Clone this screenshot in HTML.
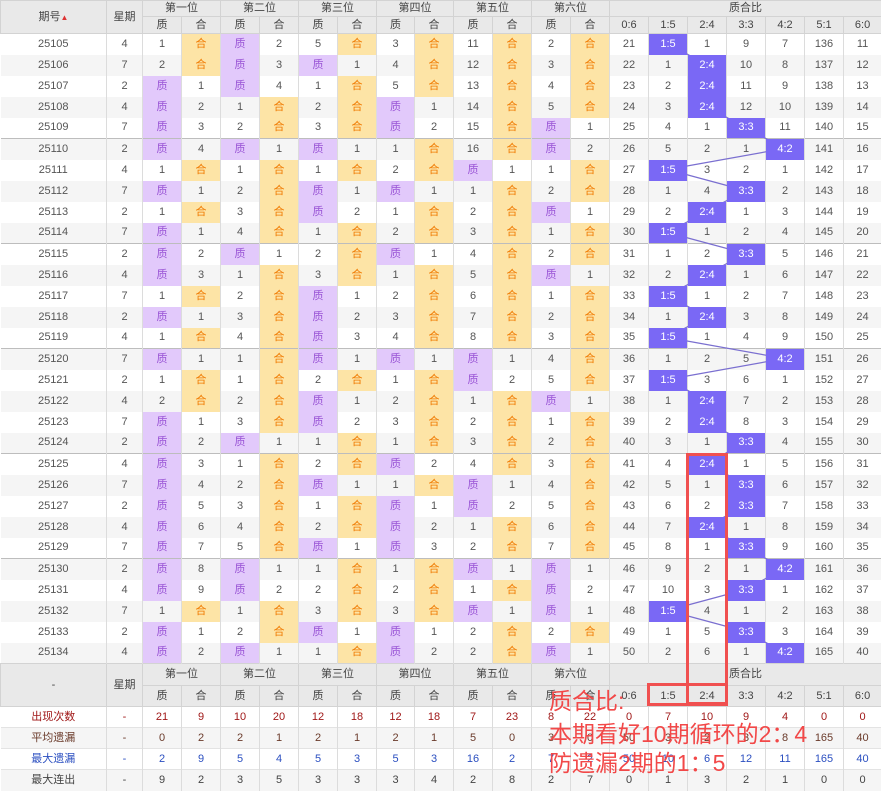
<!DOCTYPE html>
<html><head><meta charset="utf-8">
<style>
*{margin:0;padding:0;box-sizing:border-box}
body{width:881px;height:789px;overflow:hidden;background:#fff;font-family:"Liberation Sans","Noto Sans CJK SC",sans-serif;font-size:11px;color:#555;position:relative}
table{border-collapse:collapse;table-layout:fixed;width:881px;position:absolute;left:0;top:0}
td{text-align:center;border-right:1px solid #dcdcdc;padding:0;white-space:nowrap;overflow:hidden;line-height:13px;height:21px}
tr.d{height:21px}
tr.g td{background:#f5f5f5}
tr.s td{border-top:1px solid #bdbdbd}
.hd td{background:#e9e9e9;color:#444;border:1px solid #d3d3d3}
tr.h1 td{height:16px}tr.h2 td{height:17px}
tr.h3 td{height:22px}tr.h4 td{height:21px}
td.z{background:#e2c9fb !important;color:#9a55d6;position:relative;z-index:3}
td.h{background:#fde4a6 !important;color:#f07a00;position:relative;z-index:3}
td.k{background:#7a68f5 !important;color:#fff;position:relative;z-index:3}
.ft td{border-top:1px solid #e3e3e3}
.r1 td{color:#a01818}.r2 td{color:#6a3a2a}.r3 td{color:#2b4fc0}.r4 td{color:#444}
svg{position:absolute;left:0;top:0;z-index:2}
.ann{position:absolute;color:#f24848;font-size:23px;z-index:5;font-family:"Liberation Sans","Noto Sans CJK SC",sans-serif;line-height:26px}
.box{position:absolute;border:3px solid #f05050;z-index:5}
</style></head><body>
<table>
<colgroup><col style="width:106px"><col style="width:36px">
<col style="width:39px"><col style="width:39px"><col style="width:39px"><col style="width:39px"><col style="width:39px"><col style="width:39px"><col style="width:38px"><col style="width:39px"><col style="width:39px"><col style="width:39px"><col style="width:39px"><col style="width:39px">
<col style="width:39px"><col style="width:39px"><col style="width:39px"><col style="width:39px"><col style="width:39px"><col style="width:39px"><col style="width:38px"></colgroup>
<tr class="hd h1"><td rowspan="2">期号<span style="color:#d33;font-size:8px">▲</span></td><td rowspan="2">星期</td><td colspan="2">第一位</td><td colspan="2">第二位</td><td colspan="2">第三位</td><td colspan="2">第四位</td><td colspan="2">第五位</td><td colspan="2">第六位</td><td colspan="7">质合比</td></tr>
<tr class="hd h2"><td>质</td><td>合</td><td>质</td><td>合</td><td>质</td><td>合</td><td>质</td><td>合</td><td>质</td><td>合</td><td>质</td><td>合</td><td>0:6</td><td>1:5</td><td>2:4</td><td>3:3</td><td>4:2</td><td>5:1</td><td>6:0</td></tr>
<tr class="d"><td>25105</td><td>4</td><td>1</td><td class="h">合</td><td class="z">质</td><td>2</td><td>5</td><td class="h">合</td><td>3</td><td class="h">合</td><td>11</td><td class="h">合</td><td>2</td><td class="h">合</td><td>21</td><td class="k">1:5</td><td>1</td><td>9</td><td>7</td><td>136</td><td>11</td></tr>
<tr class="d g"><td>25106</td><td>7</td><td>2</td><td class="h">合</td><td class="z">质</td><td>3</td><td class="z">质</td><td>1</td><td>4</td><td class="h">合</td><td>12</td><td class="h">合</td><td>3</td><td class="h">合</td><td>22</td><td>1</td><td class="k">2:4</td><td>10</td><td>8</td><td>137</td><td>12</td></tr>
<tr class="d"><td>25107</td><td>2</td><td class="z">质</td><td>1</td><td class="z">质</td><td>4</td><td>1</td><td class="h">合</td><td>5</td><td class="h">合</td><td>13</td><td class="h">合</td><td>4</td><td class="h">合</td><td>23</td><td>2</td><td class="k">2:4</td><td>11</td><td>9</td><td>138</td><td>13</td></tr>
<tr class="d g"><td>25108</td><td>4</td><td class="z">质</td><td>2</td><td>1</td><td class="h">合</td><td>2</td><td class="h">合</td><td class="z">质</td><td>1</td><td>14</td><td class="h">合</td><td>5</td><td class="h">合</td><td>24</td><td>3</td><td class="k">2:4</td><td>12</td><td>10</td><td>139</td><td>14</td></tr>
<tr class="d"><td>25109</td><td>7</td><td class="z">质</td><td>3</td><td>2</td><td class="h">合</td><td>3</td><td class="h">合</td><td class="z">质</td><td>2</td><td>15</td><td class="h">合</td><td class="z">质</td><td>1</td><td>25</td><td>4</td><td>1</td><td class="k">3:3</td><td>11</td><td>140</td><td>15</td></tr>
<tr class="d g s"><td>25110</td><td>2</td><td class="z">质</td><td>4</td><td class="z">质</td><td>1</td><td class="z">质</td><td>1</td><td>1</td><td class="h">合</td><td>16</td><td class="h">合</td><td class="z">质</td><td>2</td><td>26</td><td>5</td><td>2</td><td>1</td><td class="k">4:2</td><td>141</td><td>16</td></tr>
<tr class="d"><td>25111</td><td>4</td><td>1</td><td class="h">合</td><td>1</td><td class="h">合</td><td>1</td><td class="h">合</td><td>2</td><td class="h">合</td><td class="z">质</td><td>1</td><td>1</td><td class="h">合</td><td>27</td><td class="k">1:5</td><td>3</td><td>2</td><td>1</td><td>142</td><td>17</td></tr>
<tr class="d g"><td>25112</td><td>7</td><td class="z">质</td><td>1</td><td>2</td><td class="h">合</td><td class="z">质</td><td>1</td><td class="z">质</td><td>1</td><td>1</td><td class="h">合</td><td>2</td><td class="h">合</td><td>28</td><td>1</td><td>4</td><td class="k">3:3</td><td>2</td><td>143</td><td>18</td></tr>
<tr class="d"><td>25113</td><td>2</td><td>1</td><td class="h">合</td><td>3</td><td class="h">合</td><td class="z">质</td><td>2</td><td>1</td><td class="h">合</td><td>2</td><td class="h">合</td><td class="z">质</td><td>1</td><td>29</td><td>2</td><td class="k">2:4</td><td>1</td><td>3</td><td>144</td><td>19</td></tr>
<tr class="d g"><td>25114</td><td>7</td><td class="z">质</td><td>1</td><td>4</td><td class="h">合</td><td>1</td><td class="h">合</td><td>2</td><td class="h">合</td><td>3</td><td class="h">合</td><td>1</td><td class="h">合</td><td>30</td><td class="k">1:5</td><td>1</td><td>2</td><td>4</td><td>145</td><td>20</td></tr>
<tr class="d s"><td>25115</td><td>2</td><td class="z">质</td><td>2</td><td class="z">质</td><td>1</td><td>2</td><td class="h">合</td><td class="z">质</td><td>1</td><td>4</td><td class="h">合</td><td>2</td><td class="h">合</td><td>31</td><td>1</td><td>2</td><td class="k">3:3</td><td>5</td><td>146</td><td>21</td></tr>
<tr class="d g"><td>25116</td><td>4</td><td class="z">质</td><td>3</td><td>1</td><td class="h">合</td><td>3</td><td class="h">合</td><td>1</td><td class="h">合</td><td>5</td><td class="h">合</td><td class="z">质</td><td>1</td><td>32</td><td>2</td><td class="k">2:4</td><td>1</td><td>6</td><td>147</td><td>22</td></tr>
<tr class="d"><td>25117</td><td>7</td><td>1</td><td class="h">合</td><td>2</td><td class="h">合</td><td class="z">质</td><td>1</td><td>2</td><td class="h">合</td><td>6</td><td class="h">合</td><td>1</td><td class="h">合</td><td>33</td><td class="k">1:5</td><td>1</td><td>2</td><td>7</td><td>148</td><td>23</td></tr>
<tr class="d g"><td>25118</td><td>2</td><td class="z">质</td><td>1</td><td>3</td><td class="h">合</td><td class="z">质</td><td>2</td><td>3</td><td class="h">合</td><td>7</td><td class="h">合</td><td>2</td><td class="h">合</td><td>34</td><td>1</td><td class="k">2:4</td><td>3</td><td>8</td><td>149</td><td>24</td></tr>
<tr class="d"><td>25119</td><td>4</td><td>1</td><td class="h">合</td><td>4</td><td class="h">合</td><td class="z">质</td><td>3</td><td>4</td><td class="h">合</td><td>8</td><td class="h">合</td><td>3</td><td class="h">合</td><td>35</td><td class="k">1:5</td><td>1</td><td>4</td><td>9</td><td>150</td><td>25</td></tr>
<tr class="d g s"><td>25120</td><td>7</td><td class="z">质</td><td>1</td><td>1</td><td class="h">合</td><td class="z">质</td><td>1</td><td class="z">质</td><td>1</td><td class="z">质</td><td>1</td><td>4</td><td class="h">合</td><td>36</td><td>1</td><td>2</td><td>5</td><td class="k">4:2</td><td>151</td><td>26</td></tr>
<tr class="d"><td>25121</td><td>2</td><td>1</td><td class="h">合</td><td>1</td><td class="h">合</td><td>2</td><td class="h">合</td><td>1</td><td class="h">合</td><td class="z">质</td><td>2</td><td>5</td><td class="h">合</td><td>37</td><td class="k">1:5</td><td>3</td><td>6</td><td>1</td><td>152</td><td>27</td></tr>
<tr class="d g"><td>25122</td><td>4</td><td>2</td><td class="h">合</td><td>2</td><td class="h">合</td><td class="z">质</td><td>1</td><td>2</td><td class="h">合</td><td>1</td><td class="h">合</td><td class="z">质</td><td>1</td><td>38</td><td>1</td><td class="k">2:4</td><td>7</td><td>2</td><td>153</td><td>28</td></tr>
<tr class="d"><td>25123</td><td>7</td><td class="z">质</td><td>1</td><td>3</td><td class="h">合</td><td class="z">质</td><td>2</td><td>3</td><td class="h">合</td><td>2</td><td class="h">合</td><td>1</td><td class="h">合</td><td>39</td><td>2</td><td class="k">2:4</td><td>8</td><td>3</td><td>154</td><td>29</td></tr>
<tr class="d g"><td>25124</td><td>2</td><td class="z">质</td><td>2</td><td class="z">质</td><td>1</td><td>1</td><td class="h">合</td><td>1</td><td class="h">合</td><td>3</td><td class="h">合</td><td>2</td><td class="h">合</td><td>40</td><td>3</td><td>1</td><td class="k">3:3</td><td>4</td><td>155</td><td>30</td></tr>
<tr class="d s"><td>25125</td><td>4</td><td class="z">质</td><td>3</td><td>1</td><td class="h">合</td><td>2</td><td class="h">合</td><td class="z">质</td><td>2</td><td>4</td><td class="h">合</td><td>3</td><td class="h">合</td><td>41</td><td>4</td><td class="k">2:4</td><td>1</td><td>5</td><td>156</td><td>31</td></tr>
<tr class="d g"><td>25126</td><td>7</td><td class="z">质</td><td>4</td><td>2</td><td class="h">合</td><td class="z">质</td><td>1</td><td>1</td><td class="h">合</td><td class="z">质</td><td>1</td><td>4</td><td class="h">合</td><td>42</td><td>5</td><td>1</td><td class="k">3:3</td><td>6</td><td>157</td><td>32</td></tr>
<tr class="d"><td>25127</td><td>2</td><td class="z">质</td><td>5</td><td>3</td><td class="h">合</td><td>1</td><td class="h">合</td><td class="z">质</td><td>1</td><td class="z">质</td><td>2</td><td>5</td><td class="h">合</td><td>43</td><td>6</td><td>2</td><td class="k">3:3</td><td>7</td><td>158</td><td>33</td></tr>
<tr class="d g"><td>25128</td><td>4</td><td class="z">质</td><td>6</td><td>4</td><td class="h">合</td><td>2</td><td class="h">合</td><td class="z">质</td><td>2</td><td>1</td><td class="h">合</td><td>6</td><td class="h">合</td><td>44</td><td>7</td><td class="k">2:4</td><td>1</td><td>8</td><td>159</td><td>34</td></tr>
<tr class="d"><td>25129</td><td>7</td><td class="z">质</td><td>7</td><td>5</td><td class="h">合</td><td class="z">质</td><td>1</td><td class="z">质</td><td>3</td><td>2</td><td class="h">合</td><td>7</td><td class="h">合</td><td>45</td><td>8</td><td>1</td><td class="k">3:3</td><td>9</td><td>160</td><td>35</td></tr>
<tr class="d g s"><td>25130</td><td>2</td><td class="z">质</td><td>8</td><td class="z">质</td><td>1</td><td>1</td><td class="h">合</td><td>1</td><td class="h">合</td><td class="z">质</td><td>1</td><td class="z">质</td><td>1</td><td>46</td><td>9</td><td>2</td><td>1</td><td class="k">4:2</td><td>161</td><td>36</td></tr>
<tr class="d"><td>25131</td><td>4</td><td class="z">质</td><td>9</td><td class="z">质</td><td>2</td><td>2</td><td class="h">合</td><td>2</td><td class="h">合</td><td>1</td><td class="h">合</td><td class="z">质</td><td>2</td><td>47</td><td>10</td><td>3</td><td class="k">3:3</td><td>1</td><td>162</td><td>37</td></tr>
<tr class="d g"><td>25132</td><td>7</td><td>1</td><td class="h">合</td><td>1</td><td class="h">合</td><td>3</td><td class="h">合</td><td>3</td><td class="h">合</td><td class="z">质</td><td>1</td><td class="z">质</td><td>1</td><td>48</td><td class="k">1:5</td><td>4</td><td>1</td><td>2</td><td>163</td><td>38</td></tr>
<tr class="d"><td>25133</td><td>2</td><td class="z">质</td><td>1</td><td>2</td><td class="h">合</td><td class="z">质</td><td>1</td><td class="z">质</td><td>1</td><td>2</td><td class="h">合</td><td>2</td><td class="h">合</td><td>49</td><td>1</td><td>5</td><td class="k">3:3</td><td>3</td><td>164</td><td>39</td></tr>
<tr class="d g"><td>25134</td><td>4</td><td class="z">质</td><td>2</td><td class="z">质</td><td>1</td><td>1</td><td class="h">合</td><td class="z">质</td><td>2</td><td>2</td><td class="h">合</td><td class="z">质</td><td>1</td><td>50</td><td>2</td><td>6</td><td>1</td><td class="k">4:2</td><td>165</td><td>40</td></tr>
<tr class="hd h3"><td rowspan="2">-</td><td rowspan="2">星期</td><td colspan="2">第一位</td><td colspan="2">第二位</td><td colspan="2">第三位</td><td colspan="2">第四位</td><td colspan="2">第五位</td><td colspan="2">第六位</td><td colspan="7">质合比</td></tr>
<tr class="hd h4"><td>质</td><td>合</td><td>质</td><td>合</td><td>质</td><td>合</td><td>质</td><td>合</td><td>质</td><td>合</td><td>质</td><td>合</td><td>0:6</td><td>1:5</td><td>2:4</td><td>3:3</td><td>4:2</td><td>5:1</td><td>6:0</td></tr>
<tr class="d ft r1"><td>出现次数</td><td>-</td><td>21</td><td>9</td><td>10</td><td>20</td><td>12</td><td>18</td><td>12</td><td>18</td><td>7</td><td>23</td><td>8</td><td>22</td><td>0</td><td>7</td><td>10</td><td>9</td><td>4</td><td>0</td><td>0</td></tr>
<tr class="d g ft r2"><td>平均遗漏</td><td>-</td><td>0</td><td>2</td><td>2</td><td>1</td><td>2</td><td>1</td><td>2</td><td>1</td><td>5</td><td>0</td><td>3</td><td>0</td><td>50</td><td>3</td><td>2</td><td>3</td><td>8</td><td>165</td><td>40</td></tr>
<tr class="d ft r3"><td>最大遗漏</td><td>-</td><td>2</td><td>9</td><td>5</td><td>4</td><td>5</td><td>3</td><td>5</td><td>3</td><td>16</td><td>2</td><td>7</td><td>2</td><td>50</td><td>10</td><td>6</td><td>12</td><td>11</td><td>165</td><td>40</td></tr>
<tr class="d g ft r4"><td>最大连出</td><td>-</td><td>9</td><td>2</td><td>3</td><td>5</td><td>3</td><td>3</td><td>3</td><td>4</td><td>2</td><td>8</td><td>2</td><td>7</td><td>0</td><td>1</td><td>3</td><td>2</td><td>1</td><td>0</td><td>0</td></tr>
</table>
<svg width="881" height="789" viewBox="0 0 881 789"><g stroke="#7a6fd0" stroke-width="1.2" fill="none">
<line x1="667.5" y1="43.5" x2="706.5" y2="64.5"/>
<line x1="706.5" y1="106.5" x2="745.5" y2="127.5"/>
<line x1="745.5" y1="127.5" x2="784.5" y2="148.5"/>
<line x1="784.5" y1="148.5" x2="667.5" y2="169.5"/>
<line x1="667.5" y1="169.5" x2="745.5" y2="190.5"/>
<line x1="745.5" y1="190.5" x2="706.5" y2="211.5"/>
<line x1="706.5" y1="211.5" x2="667.5" y2="232.5"/>
<line x1="667.5" y1="232.5" x2="745.5" y2="253.5"/>
<line x1="745.5" y1="253.5" x2="706.5" y2="274.5"/>
<line x1="706.5" y1="274.5" x2="667.5" y2="295.5"/>
<line x1="667.5" y1="295.5" x2="706.5" y2="316.5"/>
<line x1="706.5" y1="316.5" x2="667.5" y2="337.5"/>
<line x1="667.5" y1="337.5" x2="784.5" y2="358.5"/>
<line x1="784.5" y1="358.5" x2="667.5" y2="379.5"/>
<line x1="667.5" y1="379.5" x2="706.5" y2="400.5"/>
<line x1="706.5" y1="421.5" x2="745.5" y2="442.5"/>
<line x1="745.5" y1="442.5" x2="706.5" y2="463.5"/>
<line x1="706.5" y1="463.5" x2="745.5" y2="484.5"/>
<line x1="745.5" y1="505.5" x2="706.5" y2="526.5"/>
<line x1="706.5" y1="526.5" x2="745.5" y2="547.5"/>
<line x1="745.5" y1="547.5" x2="784.5" y2="568.5"/>
<line x1="784.5" y1="568.5" x2="745.5" y2="589.5"/>
<line x1="745.5" y1="589.5" x2="667.5" y2="610.5"/>
<line x1="667.5" y1="610.5" x2="745.5" y2="631.5"/>
<line x1="745.5" y1="631.5" x2="784.5" y2="652.5"/>
</g></svg>
<div class="box" style="left:686px;top:453px;width:42px;height:252px"></div>
<div class="box" style="left:647px;top:683px;width:81px;height:23px"></div>
<div class="ann" style="left:549px;top:688px">质合比:</div>
<div class="ann" style="left:549px;top:721px">本期看好10期循环的2：4</div>
<div class="ann" style="left:549px;top:750px">防遗漏2期的1：5</div>
</body></html>
